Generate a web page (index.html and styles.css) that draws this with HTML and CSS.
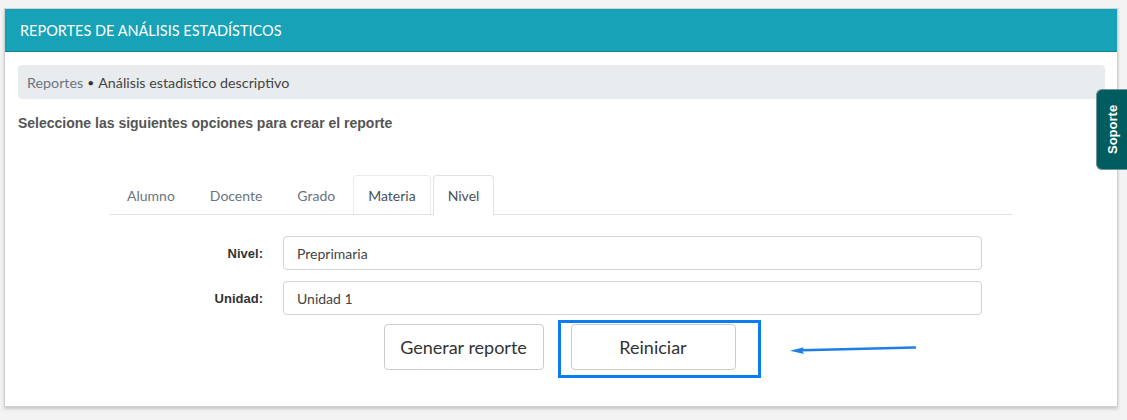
FILE: index.html
```html
<!DOCTYPE html>
<html lang="es">
<head>
<meta charset="utf-8">
<title>Reportes de análisis estadísticos</title>
<link rel="stylesheet" href="styles.css">
</head>
<body>
<div class="page">
  <div class="card">
    <div class="card-header">REPORTES DE ANÁLISIS ESTADÍSTICOS</div>
    <div class="card-body">
      <div class="breadcrumb"><span class="crumb-link">Reportes</span> <span class="crumb-sep">•</span> Análisis estadìstico descriptivo</div>
      <p class="intro">Seleccione las siguientes opciones para crear el reporte</p>
      <div class="panel">
        <ul class="tabs">
          <li class="tab">Alumno</li>
          <li class="tab">Docente</li>
          <li class="tab">Grado</li>
          <li class="tab tab-hover">Materia</li>
          <li class="tab tab-active">Nivel</li>
        </ul>
        <div class="form">
          <label class="form-label">Nivel:</label>
          <div class="form-input">Preprimaria</div>
          <label class="form-label">Unidad:</label>
          <div class="form-input">Unidad 1</div>
        </div>
        <div class="actions">
          <button class="btn">Generar reporte</button>
          <span class="highlight-wrap">
            <button class="btn btn-wide">Reiniciar</button>
            <span class="highlight-box"></span>
            <svg class="arrow" width="130" height="16" viewBox="0 0 130 16">
              <path d="M127 5.5 L14 8.3" stroke="#1f7fe6" stroke-width="2.4" fill="none" stroke-linecap="round"/>
              <path d="M2 8.7 L16 5.2 L14 8.5 L16 11.9 Z" fill="#1f7fe6"/>
            </svg>
          </span>
        </div>
      </div>
    </div>
  </div>
  <div class="support">Soporte</div>
</div>
</body>
</html>
```
FILE: styles.css
```css
* { box-sizing: border-box; }
html, body { margin: 0; padding: 0; }
body {
  background: #f3f3f3;
  font-family: Lato, "Open Sans", sans-serif;
  font-size: 14px;
  color: #444;
  height: 420px;
  overflow: hidden;
}
.page {
  padding: 8px 9px 0 4px;
  position: relative;
}
.card {
  background: #fff;
  border: 1px solid #d0d0d0;
  box-shadow: 0 2px 3px rgba(0,0,0,0.18);
  height: 399px;
}
.card-header {
  background: #17a2b8;
  color: #fff;
  height: 43px;
  padding: 0 15px;
  display: flex;
  align-items: center;
  font-size: 14.5px;
  border-bottom: 1px solid #138496;
}
.card-body {
  padding: 13px 12px 0 13px;
}
.breadcrumb {
  background: #e9ecef;
  border-radius: 4px;
  height: 34px;
  padding: 0 9px;
  display: flex;
  align-items: center;
  gap: 4px;
  font-size: 14.3px;
  color: #444;
}
.crumb-link { color: #6c757d; }
.crumb-sep { color: #333; font-size: 12px; }
.intro {
  margin: 16px 0 0;
  font-family: "Liberation Sans", Arial, sans-serif;
  font-weight: bold;
  font-size: 14px;
  color: #555;
}
.panel {
  margin: 44px 93px 0 92px;
}
.tabs {
  list-style: none;
  margin: 0;
  padding: 0;
  display: flex;
  gap: 2px;
  border-bottom: 1px solid #dee2e6;
  height: 40px;
}
.tab {
  height: 40px;
  padding: 0 15px 0 16px;
  display: flex;
  align-items: center;
  color: #6c757d;
  border: 1px solid transparent;
  border-top-left-radius: 4px;
  border-top-right-radius: 4px;
  font-size: 14px;
}
.tab-hover {
  border-color: #e9ecef #e9ecef #dee2e6;
  color: #495057;
  padding: 0 14px;
}
.tab-active {
  border-color: #dee2e6 #dee2e6 #fff;
  background: #fff;
  color: #495057;
  height: 41px;
  padding: 0 14px;
}
.form {
  margin-top: 21px;
  display: grid;
  grid-template-columns: 173px 699px;
  row-gap: 11px;
  align-items: center;
}
.form-label {
  text-align: right;
  padding-right: 20px;
  font-family: "Liberation Sans", Arial, sans-serif;
  font-weight: bold;
  font-size: 13px;
  color: #333;
}
.form-input {
  height: 34px;
  border: 1px solid #ced4da;
  border-radius: 4px;
  padding: 0 13px;
  display: flex;
  align-items: center;
  font-size: 14px;
  color: #444;
}
.actions {
  margin-top: 9px;
  display: flex;
  align-items: flex-start;
  justify-content: center;
  gap: 27px;
  padding-right: 3px;
}
.btn {
  height: 46px;
  width: 160px;
  background: #fff;
  border: 1px solid #ccc;
  border-radius: 4px;
  font-family: Lato, "Open Sans", sans-serif;
  font-size: 18px;
  color: #333;
  padding: 0;
  display: block;
}
.btn-wide { width: 165px; }
.highlight-wrap {
  position: relative;
  display: block;
  height: 46px;
}
.highlight-box {
  position: absolute;
  left: -13px;
  top: -4px;
  right: -25px;
  bottom: -8px;
  border: 3px solid #0a7df0;
}
.arrow {
  position: absolute;
  left: 217px;
  top: 18px;
}
.support {
  position: absolute;
  left: 1096px;
  top: 89px;
  width: 31px;
  height: 81px;
  background: #005d5f;
  color: #fff;
  font-family: "Liberation Sans", Arial, sans-serif;
  font-weight: bold;
  font-size: 13px;
  display: flex;
  align-items: center;
  justify-content: center;
  writing-mode: vertical-rl;
  transform: rotate(180deg);
  border-radius: 0 6px 6px 0;
  border: 1px solid #6e9597;
  border-left: none;
}
```
